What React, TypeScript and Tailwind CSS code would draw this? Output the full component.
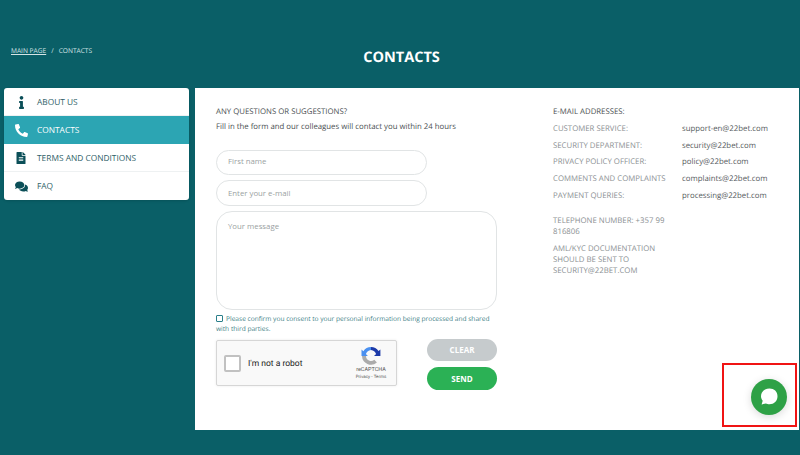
import { FaInfo, FaPhone, FaFileAlt, FaComments } from "react-icons/fa"

const menu = [
  { label: "ABOUT US", icon: <FaInfo className="text-[13px] text-[#0b4f58]" /> },
  { label: "CONTACTS", icon: <FaPhone className="text-[13px] text-white scale-x-[-1]" />, active: true },
  { label: "TERMS AND CONDITIONS", icon: <FaFileAlt className="text-[12px] text-[#0b4f58]" /> },
  { label: "FAQ", icon: <FaComments className="text-[13px] text-[#0b4f58]" /> },
]

const emails = [
  ["CUSTOMER SERVICE:", "support-en@22bet.com"],
  ["SECURITY DEPARTMENT:", "security@22bet.com"],
  ["PRIVACY POLICY OFFICER:", "policy@22bet.com"],
  ["COMMENTS AND COMPLAINTS", "complaints@22bet.com"],
  ["PAYMENT QUERIES:", "processing@22bet.com"],
]

const App = () => {
  return (
    <div className="relative h-[455px] w-[800px] overflow-hidden bg-[#0a5f67] font-['Open_Sans',sans-serif] [text-rendering:geometricPrecision]">
      <header className="relative h-[88px]">
        <div className="absolute left-[11px] top-[46px] flex gap-[5px] text-[6.6px] leading-[10px] text-[#d5e4e6]">
          <span className="underline">MAIN PAGE</span>
          <span>/</span>
          <span>CONTACTS</span>
        </div>
        <h1 className="pl-[3px] pt-[48px] text-center text-[14.5px] leading-[20px] font-bold text-white">CONTACTS</h1>
      </header>

      <div className="flex items-start gap-[6px] pl-[4px] pr-px">
        <nav className="w-[185px] overflow-hidden rounded-[3px] bg-white shadow-sm">
          {menu.map((item) => (
            <a
              key={item.label}
              className={
                item.active
                  ? "flex h-[28px] items-center bg-[#2ca5b3] text-white"
                  : "flex h-[28px] items-center text-[#2f5f68] shadow-[inset_0_-1px_0_#eef1f2] last:shadow-none"
              }
            >
              <span className="flex w-[33px] justify-center pl-[1px]">{item.icon}</span>
              <span className="pt-[2px] text-[8.35px] leading-none">{item.label}</span>
            </a>
          ))}
        </nav>

        <main className="flex h-[342px] flex-1 bg-white pl-[21px]">
          <section className="w-[281px] pt-[18px]">
            <p className="text-[7.8px] leading-[12px] text-[#4a4f52]">ANY QUESTIONS OR SUGGESTIONS?</p>
            <p className="mt-[3px] text-[7.8px] leading-[12px] text-[#4a4f52]">
              Fill in the form and our colleagues will contact you within 24 hours
            </p>
            <input
              placeholder="First name"
              className="mt-[17px] block h-[25px] w-[211px] rounded-full border border-[#e1e4e5] px-[11px] pb-[3px] text-[7.8px] outline-none placeholder:text-[#9a9fa2]"
            />
            <input
              placeholder="Enter your e-mail"
              className="mt-[5px] block h-[26px] w-[211px] rounded-full border border-[#e1e4e5] px-[11px] pb-[1px] text-[7.8px] outline-none placeholder:text-[#9a9fa2]"
            />
            <textarea
              placeholder="Your message"
              className="mt-[5px] block h-[99px] w-[281px] resize-none rounded-[16px] border border-[#e1e4e5] px-[11px] py-[9px] text-[7.8px] outline-none placeholder:text-[#9a9fa2]"
            />
            <p className="mt-[4px] text-[6.6px] leading-[10px] text-[#3f7f88]">
              <span className="mr-[3px] inline-block h-[7px] w-[7px] rounded-[1px] border border-[#2a7f8a] align-[-0.5px]" />
              Please confirm you consent to your personal information being processed and shared with third parties.
            </p>
            <div className="mt-[5px] flex items-start justify-between">
              <div className="mt-[1px] flex h-[46px] w-[181px] items-center rounded-[2px] border border-[#d6d6d6] bg-[#f9f9f9] pl-[7px] shadow-[0_0_3px_rgba(0,0,0,0.08)]">
                <span className="h-[17px] w-[17px] rounded-[2px] border-2 border-[#c1c1c1] bg-white" />
                <span className="ml-[7px] pt-[2px] font-['Roboto',sans-serif] text-[8.5px] text-[#222]">I'm not a robot</span>
                <div className="ml-auto flex w-[50px] flex-col items-center pt-[1px]">
                  <svg width="20" height="20" viewBox="0 0 20 20">
                    <path d="M10 1a9 9 0 0 0-7.6 4.2L0.5 3.5V10h6.4L4.9 8A6 6 0 0 1 10 4z" fill="#4a90f0" />
                    <path d="M10 1a9 9 0 0 1 7.5 4l1.9-1.6V10H13l2.1-2A6 6 0 0 0 10 4z" fill="#1c3aa9" />
                    <path d="M1 10h4a5 5 0 0 0 8.3 3.700l2.600 2.700A9 9 0 0 1 1 10z" fill="#ababab" />
                  </svg>
                  <span className="mt-[1px] font-['Roboto',sans-serif] text-[5.5px] leading-[7px] text-[#555]">reCAPTCHA</span>
                  <span className="font-['Roboto',sans-serif] text-[4.5px] leading-[7px] text-[#555]">Privacy - Terms</span>
                </div>
              </div>
              <div className="flex w-[70px] flex-col gap-[6px]">
                <button className="h-[22px] rounded-full bg-[#c6cbcd] text-[8px] font-bold text-white">CLEAR</button>
                <button className="h-[23px] rounded-full bg-[#2bb155] text-[8px] font-bold text-white">SEND</button>
              </div>
            </div>
          </section>

          <section className="ml-[56px] w-[230px] pt-[18px] text-[7.8px] leading-[12px]">
            <p className="text-[#4a4f52]">E-MAIL ADDRESSES:</p>
            <dl className="mt-[5px] flex flex-col gap-[4.7px]">
              {emails.map(([label, mail]) => (
                <div key={label} className="flex">
                  <dt className="w-[129px] text-[#8b9093]">{label}</dt>
                  <dd className="text-[#555a5d]">{mail}</dd>
                </div>
              ))}
            </dl>
            <p className="mt-[14px] w-[115px] leading-[11px] text-[#8b9093]">TELEPHONE NUMBER: +357 99 816806</p>
            <p className="mt-[6px] w-[115px] leading-[11px] text-[#8b9093]">AML/KYC DOCUMENTATION SHOULD BE SENT TO SECURITY@22BET.COM</p>
          </section>
        </main>
      </div>

      <div className="absolute left-[722px] top-[363px] h-[64px] w-[75px] border-2 border-[#f01414]" />
      <button className="absolute left-[751px] top-[379px] flex h-[36px] w-[36px] items-center justify-center rounded-full bg-[#2ea146] shadow-[0_2px_8px_rgba(0,0,0,0.15)]">
        <svg width="22" height="22" viewBox="0 0 22 22">
          <path d="M11.500 2.500c4.600 0 8 3 8 7.800 0 4.800-3.600 8-8 8-1.300 0-2.700-.3-3.600-.8L3.600 18.400l1.100-3.600C3.600 13.500 3 11.900 3 10.300 3 5.700 6.900 2.500 11.500 2.500z" fill="white" />
        </svg>
      </button>
    </div>
  )
}

export default App
